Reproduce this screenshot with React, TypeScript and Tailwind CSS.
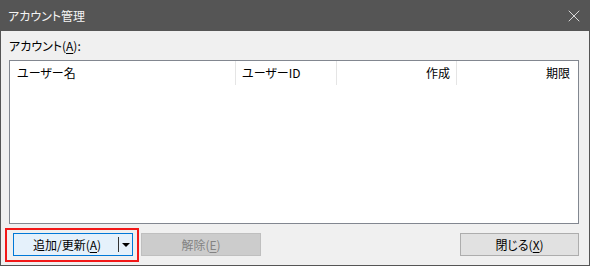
import { X } from "lucide-react";

const font = "font-['Noto_Sans_CJK_JP','Noto_Sans',sans-serif] [font-feature-settings:'palt']";

const columns = [
  { label: "ユーザー名", width: "w-[226px]", align: "justify-start pl-[7px]" },
  { label: "ユーザーID", width: "w-[101px]", align: "justify-start pl-[6px]" },
  { label: "作成", width: "w-[120px]", align: "justify-end pr-[6px]" },
];

const App = () => {
  return (
    <div className={`w-[590px] h-[266px] bg-[#f0f0f0] border border-[#555555] flex flex-col text-[12px] text-black ${font}`}>
      {/* title bar */}
      <div className="h-[30px] bg-[#555555] flex items-center justify-between pl-[7px] pr-[5px] text-[#f4f4f4]">
        <span className="text-[12px]">アカウント管理</span>
        <X className="h-[20px] w-[20px]" strokeWidth={1} />
      </div>

      <div className="flex flex-col px-[8px]">
        <div className="h-[29px] flex items-center">
          アカウント(<span className="underline underline-offset-2">A</span>):
        </div>

        {/* list view */}
        <div className="w-[570px] h-[164px] bg-white border border-[#828790]">
          <div className="h-[24px] flex">
            {columns.map((col) => (
              <div
                key={col.label}
                className={`${col.width} h-full flex items-center border-r border-[#e5e5e5] ${col.align}`}
              >
                {col.label}
              </div>
            ))}
            <div className="flex-1 h-full flex items-center justify-end pr-[8px]">期限</div>
          </div>
        </div>

        {/* buttons */}
        <div className="mt-[9px] flex items-center">
          <div className="relative ml-[4px]">
            <button className="w-[120px] h-[23px] bg-[#e5f1fb] border border-[#0078d7] flex items-center">
              <span className="flex-1 text-center pl-[2px]">
                追加/更新(<span className="underline underline-offset-2">A</span>)
              </span>
              <span className="w-[1px] h-[15px] bg-[#333333]" />
              <span className="w-[13px] flex justify-center">
                <span className="border-l-[4px] border-r-[4px] border-t-[4px] border-l-transparent border-r-transparent border-t-black" />
              </span>
            </button>
            <div className="absolute -left-[8px] -top-[5px] -right-[6px] -bottom-[6px] border-2 border-[#f21818] pointer-events-none" />
          </div>
          <button className="ml-[8px] w-[120px] h-[23px] bg-[#cccccc] border border-[#bfbfbf] text-[#838383]">
            解除(<span className="underline underline-offset-2">E</span>)
          </button>
          <button className="ml-auto mr-[2px] w-[119px] h-[23px] bg-[#e1e1e1] border border-[#adadad]">
            閉じる(<span className="underline underline-offset-2">X</span>)
          </button>
        </div>
      </div>
    </div>
  );
};

export default App;
